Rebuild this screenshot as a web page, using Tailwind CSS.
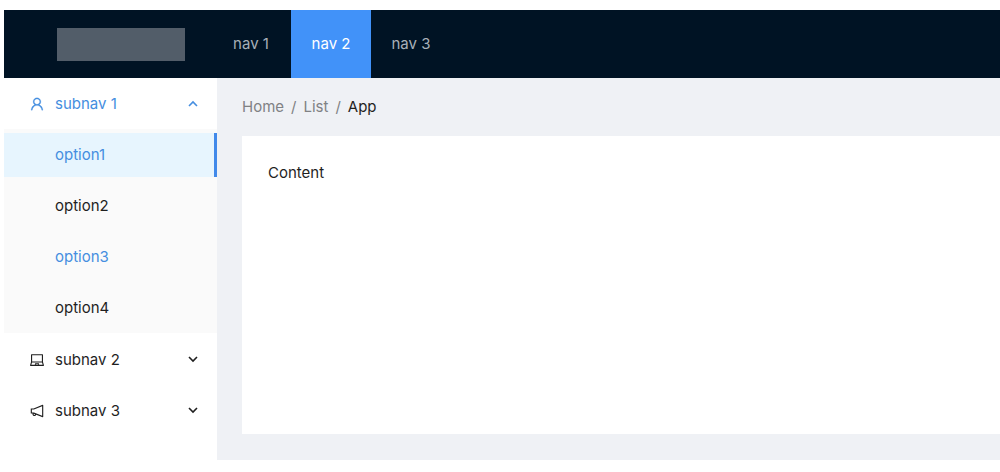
<!DOCTYPE html>
<html lang="en">
<head>
<meta charset="utf-8">
<meta name="viewport" content="width=device-width, initial-scale=1">
<title>Dashboard layout</title>
<script src="https://cdn.jsdelivr.net/npm/@tailwindcss/browser@4"></script>
</head>
<body class="flex min-h-screen flex-col bg-white pt-[10px] pb-3 pl-1 font-['Inter',sans-serif] text-[15px] text-[#1f1f1f]">
  <header class="flex h-[68px] shrink-0 items-center bg-[#001324] pl-[53px]">
    <div class="mr-[26px] h-[33px] w-32 bg-[#525d69]"></div>
    <nav class="flex h-full text-[#a8b0b8]" aria-label="Main">
      <a href="#" class="flex w-20 items-center justify-center">nav 1</a>
      <a href="#" class="flex w-20 items-center justify-center bg-[#4192f9] text-white" aria-current="page">nav 2</a>
      <a href="#" class="flex w-20 items-center justify-center">nav 3</a>
    </nav>
  </header>

  <div class="flex flex-1">
    <aside class="w-[213px] shrink-0 bg-white pt-1">
      <button type="button" aria-expanded="true" class="flex h-11 w-full items-center pr-[18px] pl-[25px] text-[#458ee0]">
        <svg class="mr-[10px] size-4" viewBox="0 0 1024 1024" fill="currentColor" aria-hidden="true"><path d="M858.5 763.6a374 374 0 00-80.6-119.5 375.63 375.63 0 00-119.5-80.6c-.4-.2-.8-.3-1.2-.5C719.5 518 760 444.7 760 362c0-137-111-248-248-248S264 225 264 362c0 82.7 40.5 156 102.8 201.1-.4.2-.8.3-1.2.5-44.8 18.9-85 46-119.5 80.6a375.63 375.63 0 00-80.6 119.5A371.7 371.7 0 00136 901.8a8 8 0 008 8.2h60c4.4 0 7.9-3.5 8-7.8 2-77.2 33-149.5 87.8-204.3 56.7-56.7 132-87.9 212.2-87.9s155.5 31.2 212.2 87.9C779 752.7 810 825 812 902.2c.1 4.4 3.6 7.8 8 7.8h60a8 8 0 008-8.2c-1-47.8-10.9-94.3-29.5-138.2zM512 534c-45.9 0-89.1-17.9-121.6-50.4S340 407.9 340 362c0-45.9 17.9-89.1 50.4-121.6S466.1 190 512 190s89.1 17.9 121.6 50.4S684 316.1 684 362c0 45.9-17.9 89.1-50.4 121.6S557.9 534 512 534z" stroke="currentColor" stroke-width="14"/></svg>
        <span class="flex-1 text-left">subnav 1</span>
        <svg class="h-3 w-3" viewBox="0 0 12 12" fill="none" stroke="currentColor" stroke-width="1.6" aria-hidden="true"><path d="M2 8l4-4 4 4"/></svg>
      </button>
      <ul class="mt-[3px] flex flex-col gap-[7px] bg-[#fafafa] pt-1 pb-[3px]">
        <li><a href="#" class="flex h-11 items-center border-r-3 border-[#4189ea] bg-[#e7f5fe] pl-[51px] text-[#458ee0]">option1</a></li>
        <li><a href="#" class="flex h-11 items-center pl-[51px]">option2</a></li>
        <li><a href="#" class="flex h-11 items-center pl-[51px] text-[#458ee0]">option3</a></li>
        <li><a href="#" class="flex h-11 items-center pl-[51px]">option4</a></li>
      </ul>
      <div class="mt-[5px] flex flex-col gap-[7px]">
        <button type="button" aria-expanded="false" class="flex h-11 w-full items-center pr-[18px] pl-[25px]">
          <svg class="mr-[10px] size-4" viewBox="0 0 1024 1024" fill="currentColor" aria-hidden="true"><path d="M956.9 845.1L896.4 632V168c0-17.7-14.3-32-32-32h-704c-17.7 0-32 14.3-32 32v464L67.9 845.1C60.4 866 75.8 888 98 888h828.8c22.2 0 37.6-22 30.1-42.9zM200.4 208h624v395h-624V208zm228.3 608l8.1-37h150.3l8.1 37H428.7zm224 0l-19.1-86.7c-.8-3.7-4.1-6.3-7.8-6.3H398.2c-3.8 0-7 2.6-7.8 6.3L371.3 816H151l42.3-149h638.2l42.3 149H652.7z"/></svg>
          <span class="flex-1 text-left">subnav 2</span>
          <svg class="h-3 w-3" viewBox="0 0 12 12" fill="none" stroke="currentColor" stroke-width="1.6" aria-hidden="true"><path d="M2 3l4 4 4-4"/></svg>
        </button>
        <button type="button" aria-expanded="false" class="flex h-11 w-full items-center pr-[18px] pl-[25px]">
          <svg class="mr-[10px] size-4" viewBox="0 0 1024 1024" fill="currentColor" aria-hidden="true"><path d="M880 112c-3.8 0-7.7.7-11.6 2.3L292 345.9H128c-8.8 0-16 7.4-16 16.6v299c0 9.2 7.2 16.6 16 16.6h101.7c-3.7 11.6-5.7 23.9-5.7 36.4 0 65.9 53.8 119.5 120 119.5 55.4 0 102.1-37.6 115.9-88.4l408.6 164.2c3.9 1.5 7.8 2.3 11.6 2.3 16.9 0 32-14.2 32-33.2V145.2C912 126.2 897 112 880 112zM344 762.3c-26.5 0-48-21.4-48-47.8 0-11.2 3.9-21.9 11-30.4l84.9 34.1c-2 24.6-22.7 44.1-47.9 44.1zm496 58.4L318.8 611.3l-12.9-5.2H184V417.9h121.9l12.9-5.2L840 203.3v617.4z"/></svg>
          <span class="flex-1 text-left">subnav 3</span>
          <svg class="h-3 w-3" viewBox="0 0 12 12" fill="none" stroke="currentColor" stroke-width="1.6" aria-hidden="true"><path d="M2 3l4 4 4-4"/></svg>
        </button>
      </div>
    </aside>

    <div class="flex min-w-0 flex-1 flex-col bg-[#eff1f5] pb-[26px] pl-[25px]">
      <nav class="flex h-[58px] items-center gap-[7px] text-[#808184]" aria-label="Breadcrumb">
        <a href="#">Home</a>
        <span>/</span>
        <a href="#">List</a>
        <span>/</span>
        <span class="text-[#1f1f1f]" aria-current="page">App</span>
      </nav>
      <main class="flex-1 bg-white p-[26px]">Content</main>
    </div>
  </div>
</body>
</html>
